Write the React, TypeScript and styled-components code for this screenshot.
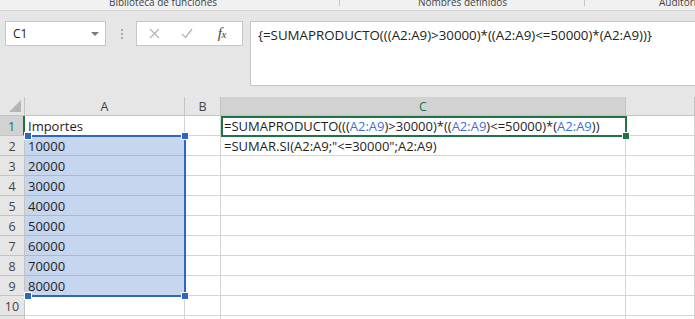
import styled, { createGlobalStyle, css } from "styled-components";

const GlobalStyle = createGlobalStyle`
  body {
    margin: 0;
    background: #ffffff;
    overflow: hidden;
  }
`;

const Page = styled.div`
  width: 695px;
  height: 319px;
  overflow: hidden;
  display: flex;
  flex-direction: column;
  font-family: "Open Sans", "Noto Sans", sans-serif;
`;

// ribbon group captions, cut off at the top of the shot
const RibbonLabels = styled.div`
  height: 11px;
  flex: none;
  display: flex;
  background: #f1f1f1;
  border-bottom: 1px solid #d5d5d5;
  box-sizing: border-box;
  overflow: hidden;
`;

const RibbonGroup = styled.div<{ $width?: number; $pad?: string; $sep?: boolean }>`
  position: relative;
  flex: ${(p) => (p.$width ? `0 0 ${p.$width}px` : "1")};
  display: flex;
  justify-content: ${(p) => (p.$width ? "center" : "flex-start")};
  padding: ${(p) => p.$pad || "0"};
  box-sizing: border-box;
  ${(p) =>
    p.$sep &&
    css`
      &::after {
        content: "";
        position: absolute;
        right: 0;
        top: 0;
        height: 6px;
        width: 1px;
        background: #c6c6c6;
      }
    `}
`;

const RibbonCaption = styled.span`
  font-size: 10px;
  line-height: 12px;
  margin-top: -4px;
  color: #444444;
  white-space: nowrap;
`;

const FormulaArea = styled.div`
  height: 86px;
  flex: none;
  display: flex;
  align-items: flex-start;
  padding: 10px 0 0 5px;
  box-sizing: border-box;
  background: #e6e6e6;
`;

const NameBox = styled.div`
  width: 101px;
  height: 25px;
  box-sizing: border-box;
  background: #ffffff;
  border: 1px solid #c6c6c6;
  display: flex;
  align-items: center;
  justify-content: space-between;
  padding: 0 6px 0 7px;
  font-size: 12px;
  color: #222;
`;

const DropArrow = styled.span`
  width: 0;
  height: 0;
  border-left: 4px solid transparent;
  border-right: 4px solid transparent;
  border-top: 4px solid #7a7a7a;
`;

const Grip = styled.div`
  width: 2px;
  height: 12px;
  margin: 7px 13px 0 15px;
  background: radial-gradient(circle, #a9a9a9 0.9px, transparent 1.1px) 0 0 / 2px 4px repeat-y;
`;

const ButtonBox = styled.div`
  width: 107px;
  height: 25px;
  box-sizing: border-box;
  background: #ffffff;
  border: 1px solid #c6c6c6;
  display: flex;
  align-items: center;
`;

const BarButton = styled.span<{ $width: number }>`
  width: ${(p) => p.$width}px;
  display: flex;
  justify-content: center;
  align-items: center;
`;

const Fx = styled.span`
  font-family: "Liberation Serif", "DejaVu Serif", serif;
  font-style: italic;
  font-size: 15px;
  color: #444444;
  letter-spacing: -0.5px;
  & small {
    font-size: 11px;
  }
`;

const FormulaBox = styled.div`
  flex: 1;
  height: 65px;
  margin-left: 7px;
  box-sizing: border-box;
  background: #ffffff;
  border: 1px solid #c6c6c6;
  border-right: none;
  padding: 5px 0 0 7px;
  font-size: 13.3px;
  line-height: 17px;
  color: #222;
  white-space: nowrap;
`;

const GridWrap = styled.div`
  position: relative;
  flex: 1;
  overflow: hidden;
`;

const Grid = styled.div`
  display: grid;
  grid-template-columns: 25px 160px 36px 405px 1fr;
  grid-template-rows: 19px;
  grid-auto-rows: 20px;
`;

const Corner = styled.div`
  background: #e6e6e6;
  border-right: 1px solid #c4c4c4;
  border-bottom: 1px solid #c4c4c4;
  box-sizing: border-box;
  display: flex;
  align-items: flex-end;
  justify-content: flex-end;
  padding: 0 3px 3px 0;
  &::after {
    content: "";
    width: 0;
    height: 0;
    border-left: 12px solid transparent;
    border-bottom: 12px solid #b5b5b5;
  }
`;

const ColHeader = styled.div<{ $active?: boolean }>`
  background: ${(p) => (p.$active ? "#d2d2d2" : "#e6e6e6")};
  color: ${(p) => (p.$active ? "#217346" : "#444444")};
  border-right: 1px solid #c4c4c4;
  border-bottom: 1px solid #c4c4c4;
  box-sizing: border-box;
  display: flex;
  align-items: center;
  justify-content: center;
  font-size: 12.5px;
`;

const RowHeader = styled.div<{ $active?: boolean }>`
  background: ${(p) => (p.$active ? "#d2d2d2" : "#e6e6e6")};
  color: ${(p) => (p.$active ? "#217346" : "#444444")};
  border-right: ${(p) => (p.$active ? "2px solid #217346" : "1px solid #c4c4c4")};
  border-bottom: 1px solid #c4c4c4;
  box-sizing: border-box;
  display: flex;
  align-items: center;
  justify-content: center;
  font-size: 12.5px;
  padding-top: 1px;
`;

const Cell = styled.div<{ $selected?: boolean }>`
  background: ${(p) => (p.$selected ? "#c6d6ef" : "#ffffff")};
  border-right: 1px solid ${(p) => (p.$selected ? "#aab8d0" : "#d4d4d4")};
  border-bottom: 1px solid ${(p) => (p.$selected ? "#aab8d0" : "#d4d4d4")};
  box-sizing: border-box;
  padding: 1px 0 0 3px;
  font-size: 13px;
  line-height: 18px;
  color: #1e1e1e;
  white-space: nowrap;
  overflow: visible;
  position: relative;
  z-index: 1;
`;

const Ref = styled.span`
  color: #3c6fd5;
`;

const RangeBox = styled.div`
  position: absolute;
  left: 25px;
  top: 38px;
  width: 161px;
  height: 162px;
  box-sizing: border-box;
  border-top: 2px solid #2f66c4;
  border-right: 2px solid #2f66c4;
  border-bottom: 2px solid #2f66c4;
  z-index: 2;
  pointer-events: none;
`;

const Handle = styled.span<{ $x: "left" | "right"; $y: "top" | "bottom"; $color: string }>`
  position: absolute;
  width: 6px;
  height: 6px;
  background: ${(p) => p.$color};
  outline: 1px solid #ffffff;
  ${(p) => (p.$x === "left" ? "left: 0;" : "right: -4px;")}
  ${(p) => (p.$y === "top" ? "top: -4px;" : "bottom: -4px;")}
`;

const ActiveCell = styled.div`
  position: absolute;
  left: 221px;
  top: 19px;
  width: 406px;
  height: 21px;
  box-sizing: border-box;
  border: 2px solid #217346;
  z-index: 3;
  pointer-events: none;
`;

const XIcon = () => (
  <svg width="11" height="11" viewBox="0 0 11 11">
    <path d="M1 1 L10 10 M10 1 L1 10" stroke="#b4b4b4" strokeWidth="1.3" fill="none" />
  </svg>
);

const CheckIcon = () => (
  <svg width="12" height="11" viewBox="0 0 12 11">
    <path d="M1 6 L4.5 9.5 L11 1" stroke="#b4b4b4" strokeWidth="1.3" fill="none" />
  </svg>
);

const values = ["10000", "20000", "30000", "40000", "50000", "60000", "70000", "80000"];

const r = "A2:A9";

function App() {
  return (
    <Page>
      <GlobalStyle />
      <RibbonLabels>
        <RibbonGroup $width={340} $pad="0 14px 0 0" $sep>
          <RibbonCaption>Biblioteca de funciones</RibbonCaption>
        </RibbonGroup>
        <RibbonGroup $width={245} $sep>
          <RibbonCaption>Nombres definidos</RibbonCaption>
        </RibbonGroup>
        <RibbonGroup $pad="0 0 0 74px">
          <RibbonCaption>Auditoría de fórmulas</RibbonCaption>
        </RibbonGroup>
      </RibbonLabels>

      <FormulaArea>
        <NameBox>
          <span>C1</span>
          <DropArrow />
        </NameBox>
        <Grip />
        <ButtonBox>
          <BarButton $width={38}>
            <XIcon />
          </BarButton>
          <BarButton $width={32}>
            <CheckIcon />
          </BarButton>
          <BarButton $width={44}>
            <Fx>
              f<small>x</small>
            </Fx>
          </BarButton>
        </ButtonBox>
        <FormulaBox>{"{=SUMAPRODUCTO(((A2:A9)>30000)*((A2:A9)<=50000)*(A2:A9))}"}</FormulaBox>
      </FormulaArea>

      <GridWrap>
        <Grid>
          <Corner />
          <ColHeader>A</ColHeader>
          <ColHeader>B</ColHeader>
          <ColHeader $active>C</ColHeader>
          <ColHeader />

          <RowHeader $active>1</RowHeader>
          <Cell>Importes</Cell>
          <Cell />
          <Cell>
            =SUMAPRODUCTO(((<Ref>{r}</Ref>)&gt;30000)*((<Ref>{r}</Ref>)&lt;=50000)*(<Ref>{r}</Ref>))
          </Cell>
          <Cell />

          {values.map((v, i) => (
            <>
              <RowHeader key={`h${i}`}>{i + 2}</RowHeader>
              <Cell key={`a${i}`} $selected>
                {v}
              </Cell>
              <Cell key={`b${i}`} />
              <Cell key={`c${i}`}>{i === 0 ? '=SUMAR.SI(A2:A9;"<=30000";A2:A9)' : ""}</Cell>
              <Cell key={`d${i}`} />
            </>
          ))}

          <RowHeader>10</RowHeader>
          <Cell />
          <Cell />
          <Cell />
          <Cell />
          <RowHeader />
          <Cell />
          <Cell />
          <Cell />
          <Cell />
        </Grid>

        <RangeBox>
          <Handle $x="left" $y="top" $color="#2f66c4" />
          <Handle $x="right" $y="top" $color="#2f66c4" />
          <Handle $x="left" $y="bottom" $color="#2f66c4" />
          <Handle $x="right" $y="bottom" $color="#2f66c4" />
        </RangeBox>
        <ActiveCell>
          <Handle $x="right" $y="bottom" $color="#217346" />
        </ActiveCell>
      </GridWrap>
    </Page>
  );
}

export default App;
